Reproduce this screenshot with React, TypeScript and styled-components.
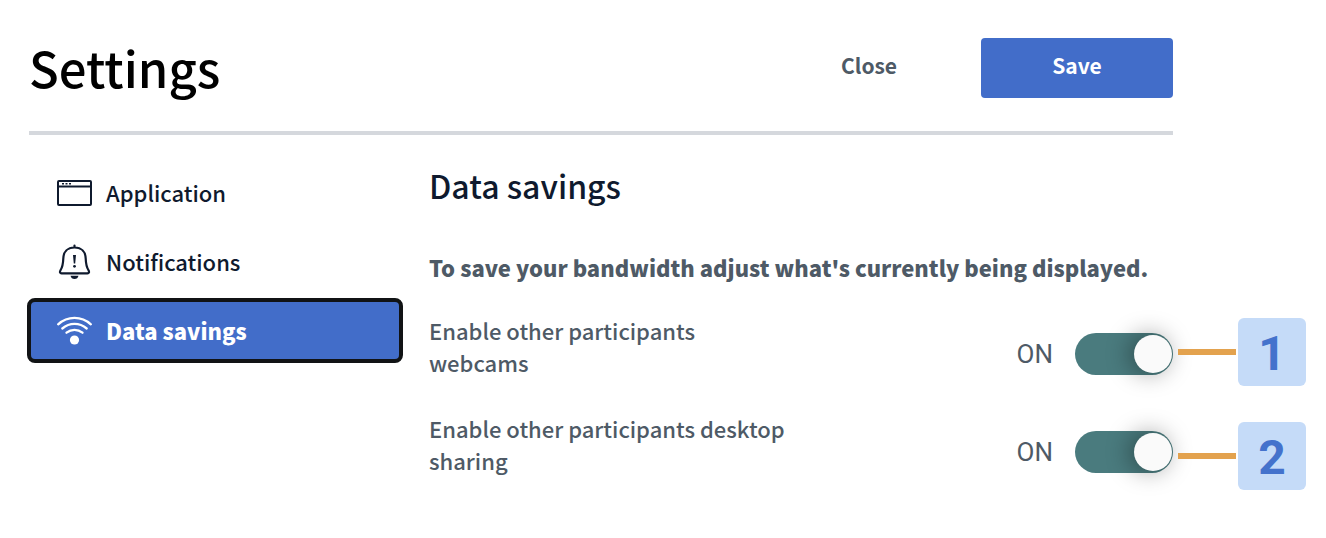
import React, { useState } from "react";
import styled, { createGlobalStyle } from "styled-components";

const GlobalStyle = createGlobalStyle`
  *, *::before, *::after { box-sizing: border-box; }
  body {
    margin: 0;
    background: #fff;
    color: #0f1a2e;
    font-family: "Source Sans Pro", "Noto Sans CJK SC", "Noto Sans", sans-serif;
    font-size: 22px;
    font-weight: 500;
    line-height: 32px;
  }
  h1, h2, p { margin: 0; }
  button { font: inherit; cursor: pointer; }
`;

const Page = styled.div`
  display: grid;
  grid-template-columns: minmax(0, 1fr) 128px;
  column-gap: 5px;
  padding: 38px 20px 48px 29px;
`;

const Panel = styled.main`
  min-width: 0;
`;

const Header = styled.header`
  display: flex;
  justify-content: space-between;
  align-items: flex-start;
  height: 97px;
  border-bottom: 4px solid #d5d8dd;
`;

const Title = styled.h1`
  color: #000;
  font-size: 49px;
  font-weight: 500;
  line-height: 58px;
`;

const Actions = styled.div`
  display: flex;
  gap: 16px;
`;

const ActionButton = styled.button<{ $primary?: boolean }>`
  width: 192px;
  height: 60px;
  padding: 0 0 6px;
  border: 0;
  border-radius: 4px;
  background: ${(p) => (p.$primary ? "#426dc9" : "transparent")};
  color: ${(p) => (p.$primary ? "#fff" : "#4e5a66")};
  font-size: 21px;
  font-weight: 700;
`;

const Body = styled.div`
  display: flex;
  gap: 26px;
  padding-top: 25px;
`;

const Nav = styled.nav`
  display: flex;
  flex: 0 0 376px;
  flex-direction: column;
  gap: 4px;
  margin-left: -2px;
`;

const Tab = styled.button<{ $active: boolean }>`
  display: flex;
  align-items: center;
  gap: 14px;
  height: 65px;
  padding: 0 26px;
  border: 4px solid ${(p) => (p.$active ? "#111315" : "transparent")};
  border-radius: 8px;
  background: ${(p) => (p.$active ? "#426dc9" : "transparent")};
  color: ${(p) => (p.$active ? "#fff" : "inherit")};
  font-weight: ${(p) => (p.$active ? 900 : 500)};
  text-align: left;
`;

const TabLabel = styled.span`
  padding-bottom: 2px;
`;

const Icon = styled.svg`
  flex: none;
  width: 35px;
  height: 36px;
  fill: none;
  stroke: currentColor;
  stroke-width: 2;
  stroke-linecap: round;
  stroke-linejoin: round;
`;

const Content = styled.section`
  flex: 1;
  min-width: 0;
  color: #4e5a66;
`;

const SectionTitle = styled.h2`
  color: #0f1a2e;
  font-size: 32px;
  font-weight: 500;
  line-height: 50px;
`;

const Intro = styled.p`
  margin: 41px 0 31px;
  font-weight: 900;
`;

const SettingRow = styled.div`
  display: flex;
  justify-content: space-between;
  height: 80px;
  margin-bottom: 18px;
`;

const SettingLabel = styled.label`
  max-width: 364px;
`;

const Control = styled.div`
  display: flex;
  align-items: center;
  gap: 22px;
`;

const State = styled.span`
  font-family: Roboto, sans-serif;
  font-size: 26px;
  font-weight: 400;
`;

const Switch = styled.input`
  appearance: none;
  display: flex;
  align-items: center;
  justify-content: ${(p) => (p.checked ? "flex-end" : "flex-start")};
  width: 98px;
  height: 42px;
  margin: 0;
  padding: 0 1px;
  border-radius: 21px;
  background: ${(p) => (p.checked ? "#4a7b7e" : "#8b9aa8")};
  cursor: pointer;

  &::before {
    content: "";
    width: 38px;
    height: 38px;
    border-radius: 50%;
    background: #fafafa;
    box-shadow: -4px 0 24px rgba(0, 0, 0, 0.4);
  }
`;

const Callouts = styled.aside`
  display: flex;
  flex-direction: column;
  gap: 36px;
  padding-top: 280px;
`;

const Callout = styled.div`
  display: flex;
  align-items: center;
  gap: 2px;
`;

const Connector = styled.span`
  flex: 1;
  height: 6px;
  background: #e3a24e;
`;

const Marker = styled.span`
  width: 68px;
  height: 68px;
  border-radius: 6px;
  background: #c5dbf8;
  color: #4472cc;
  font-family: Roboto, sans-serif;
  font-size: 48px;
  font-weight: 700;
  line-height: 72px;
  text-align: center;
`;

const ApplicationIcon = () => (
  <Icon viewBox="0 0 35 36" aria-hidden="true">
    <rect x="1" y="6" width="33" height="24" rx="1" />
    <path d="M1 11.5h33" />
    <path d="M5 8.800h2M8.500 8.800h2M12 8.800h2" strokeWidth="1.500" strokeLinecap="butt" />
  </Icon>
);

const BellIcon = () => (
  <Icon viewBox="0 0 35 36" aria-hidden="true">
    <path
      d="M17.500 1.500v2M17.500 3.500C10.500 3.500 6.500 8 6.300 14.500C6.100 20.500 5.500 23 3.500 26.300C2.500 28 3 29.300 4.500 29.300H30.500C32 29.300 32.500 28 31.500 26.300C29.500 23 28.900 20.500 28.700 14.500C28.500 8 24.500 3.500 17.500 3.500Z"
      strokeWidth="2.200"
    />
    <path d="M13.500 31.700h8c-.4 2-1.900 3.300-4 3.300s-3.600-1.300-4-3.300z" fill="currentColor" stroke="none" />
    <path d="M16 11h3l-.8 8.500h-1.400z" fill="currentColor" stroke="none" />
    <circle cx="17.500" cy="22.300" r="1.400" fill="currentColor" stroke="none" />
  </Icon>
);

const WifiIcon = () => (
  <Icon viewBox="0 0 35 36" aria-hidden="true">
    <path d="M1.200 11.300C10.500 2.800 24.500 2.800 33.800 11.300" strokeWidth="2.300" />
    <path d="M5.300 15.500C12.500 9.400 22.500 9.400 29.700 15.500" strokeWidth="2.300" />
    <path d="M9.500 19.700C14.300 15.800 20.700 15.800 25.500 19.700" strokeWidth="2.300" />
    <circle cx="17.500" cy="27" r="4.600" fill="currentColor" stroke="none" />
  </Icon>
);

const tabs = [
  { name: "Application", icon: <ApplicationIcon /> },
  { name: "Notifications", icon: <BellIcon /> },
  { name: "Data savings", icon: <WifiIcon /> },
];

const settings = [
  { id: "webcams", label: "Enable other participants webcams" },
  { id: "desktop", label: "Enable other participants desktop sharing" },
];

export default function App() {
  const [active, setActive] = useState("Data savings");
  const [enabled, setEnabled] = useState<Record<string, boolean>>({ webcams: true, desktop: true });

  return (
    <>
      <GlobalStyle />
      <Page>
        <Panel>
          <Header>
            <Title>Settings</Title>
            <Actions>
              <ActionButton type="button">Close</ActionButton>
              <ActionButton type="button" $primary>Save</ActionButton>
            </Actions>
          </Header>
          <Body>
            <Nav>
              {tabs.map((tab) => (
                <Tab
                  key={tab.name}
                  type="button"
                  $active={tab.name === active}
                  aria-pressed={tab.name === active}
                  onClick={() => setActive(tab.name)}
                >
                  {tab.icon}
                  <TabLabel>{tab.name}</TabLabel>
                </Tab>
              ))}
            </Nav>
            <Content>
              <SectionTitle>Data savings</SectionTitle>
              <Intro>To save your bandwidth adjust what's currently being displayed.</Intro>
              {settings.map(({ id, label }) => (
                <SettingRow key={id}>
                  <SettingLabel htmlFor={id}>{label}</SettingLabel>
                  <Control>
                    <State>{enabled[id] ? "ON" : "OFF"}</State>
                    <Switch
                      id={id}
                      type="checkbox"
                      role="switch"
                      checked={enabled[id]}
                      onChange={(e) => setEnabled({ ...enabled, [id]: e.target.checked })}
                    />
                  </Control>
                </SettingRow>
              ))}
            </Content>
          </Body>
        </Panel>
        <Callouts>
          {[1, 2].map((n) => (
            <Callout key={n}>
              <Connector />
              <Marker>{n}</Marker>
            </Callout>
          ))}
        </Callouts>
      </Page>
    </>
  );
}
